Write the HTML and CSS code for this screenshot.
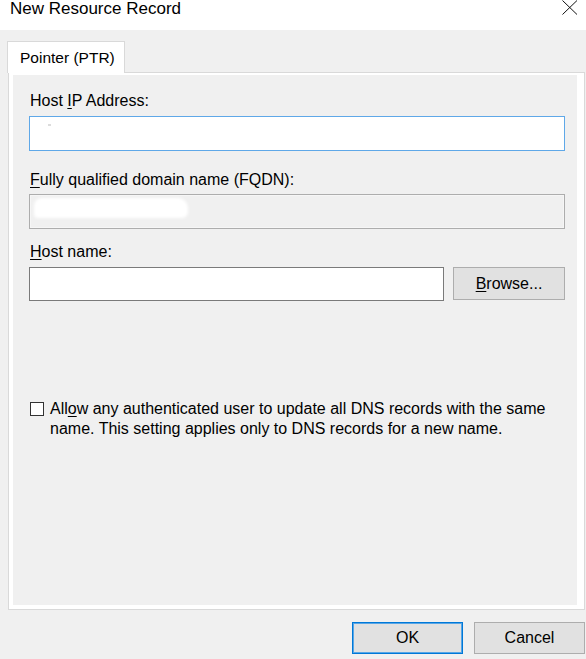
FILE: index.html
```html
<!DOCTYPE html>
<html lang="en">
<head>
    <meta charset="UTF-8">
    <title>New Resource Record</title>
    <link rel="stylesheet" href="styles.css">
</head>
<body>
    <!-- Window title bar -->
    <div class="titlebar">
        <span class="title">New Resource Record</span>
        <svg class="close" width="16" height="15" viewBox="0 0 16 15">
            <path d="M0.5 0.5 L15 14.5 M15 0.5 L0.5 14.5" stroke="#111" stroke-width="1" fill="none"/>
        </svg>
    </div>

    <div class="dialog">
        <!-- Tab strip -->
        <div class="tabs">
            <div class="tab">Pointer (PTR)</div>
        </div>

        <!-- Tab page -->
        <div class="panel">
            <div class="page">
                <label class="label first">Host <u>I</u>P Address:</label>
                <div class="textbox focused"><span class="speck"></span></div>

                <label class="label second"><u>F</u>ully qualified domain name (FQDN):</label>
                <div class="textbox disabled"><span class="smudge"></span></div>

                <label class="label third"><u>H</u>ost name:</label>
                <div class="host-row">
                    <div class="textbox host"></div>
                    <button class="btn browse"><u>B</u>rowse...</button>
                </div>

                <div class="check-row">
                    <span class="checkbox"></span>
                    <span class="check-text">All<u>o</u>w any authenticated user to update all DNS records with the same name. This setting applies only to DNS records for a new name.</span>
                </div>
            </div>
        </div>

        <!-- Dialog buttons -->
        <div class="actions">
            <button class="btn ok">OK</button>
            <button class="btn">Cancel</button>
        </div>
    </div>
</body>
</html>
```

FILE: styles.css
```css
/* Global */
* {
    box-sizing: border-box;
}

html, body {
    margin: 0;
    padding: 0;
    background: #f0f0f0;
    font-family: "Liberation Sans", Arial, sans-serif;
    font-size: 16px;
    color: #000;
    overflow: hidden;
}

u {
    text-decoration: underline;
    text-underline-offset: 2px;
}

/* Title bar */
.titlebar {
    height: 30px;
    background: #fff;
    display: flex;
    align-items: flex-start;
    justify-content: space-between;
    padding: 0 8px 0 10px;
}

.title {
    font-size: 17px;
    line-height: 20px;
    margin-top: -1px;
}

.close {
    display: block;
}

/* Dialog body */
.dialog {
    padding: 11px 1px 0 8px;
}

.tabs {
    display: flex;
    margin-left: -1px;
    margin-bottom: -1px;
    position: relative;
    z-index: 1;
}

.tab {
    width: 118px;
    height: 32px;
    padding-left: 12px;
    font-size: 15.5px;
    line-height: 31px;
    background: #fff;
    border: 1px solid #d9d9d9;
    border-bottom: none;
}

/* Tab page */
.panel {
    border: 1px solid #d9d9d9;
    background: #fff;
    padding: 2px 7px 4px 4px;
}

.page {
    background: #f0f0f0;
    height: 530px;
    padding: 16px 12px 0 16px;
}

.label {
    display: block;
    line-height: 20px;
    padding-left: 1px;
}

.label.first {
    margin-bottom: 5px;
}

.label.second {
    margin-top: 19px;
    margin-bottom: 4px;
}

.label.third {
    margin-top: 13px;
    margin-bottom: 5px;
}

.textbox {
    height: 35px;
    border: 1px solid #7a7a7a;
    background: #fff;
    position: relative;
}

.textbox.focused {
    border-color: #5fa8e8;
}

.textbox.disabled {
    border-color: #adadad;
    background: #f0f0f0;
    box-shadow: inset 0 0 0 1px #f6f6f6;
}

/* redacted content marks */
.speck {
    position: absolute;
    left: 18px;
    top: 7px;
    width: 3px;
    height: 2px;
    background: #dcdcdc;
}

.smudge {
    position: absolute;
    left: 4px;
    top: 3px;
    width: 154px;
    height: 20px;
    background: #fff;
    border-radius: 8px 10px 6px 4px;
    filter: blur(1.5px);
}

.host-row {
    display: flex;
    align-items: flex-start;
    gap: 9px;
}

.textbox.host {
    flex: 1;
    height: 34px;
}

.btn {
    font-family: inherit;
    font-size: 16px;
    color: #000;
    background: #e1e1e1;
    border: 1px solid #adadad;
    height: 33px;
    padding: 0;
    cursor: pointer;
}

.btn.browse {
    width: 112px;
}

/* Checkbox */
.check-row {
    display: flex;
    margin-top: 98px;
    padding-left: 1px;
}

.checkbox {
    flex: none;
    width: 14px;
    height: 14px;
    border: 1px solid #333;
    background: #fff;
    margin-top: 3px;
    margin-right: 6px;
}

.check-text {
    line-height: 20px;
}

/* Bottom buttons */
.actions {
    display: flex;
    justify-content: flex-end;
    gap: 11px;
    margin-top: 12px;
}

.actions .btn {
    width: 111px;
    height: 32px;
}

.btn.ok {
    border-color: #0078d7;
    box-shadow: inset 0 0 0 1px #58a6e6;
}
```
